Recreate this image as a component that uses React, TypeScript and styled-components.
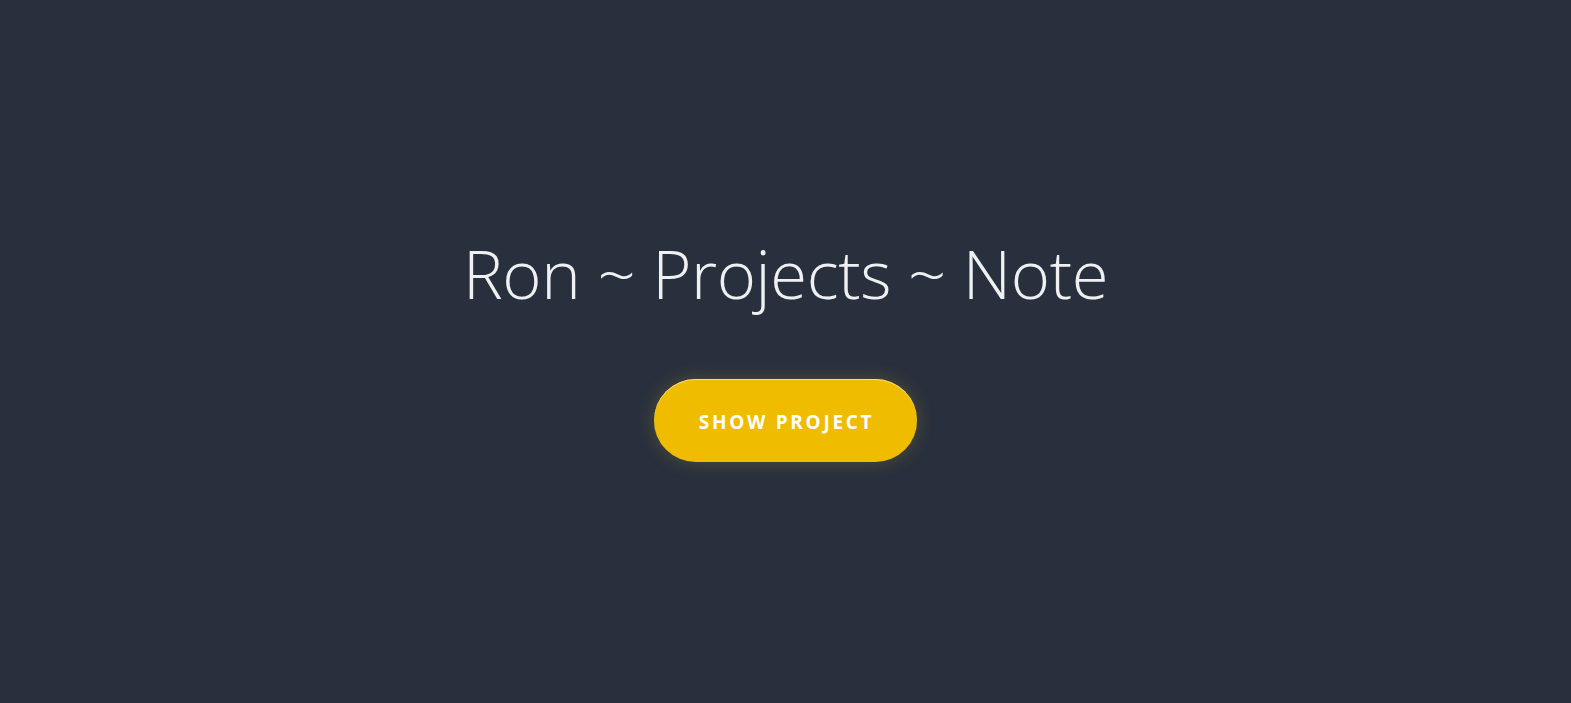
import React from "react";
import styled, { createGlobalStyle } from "styled-components";

const Global = createGlobalStyle`
  html, body { margin: 0; padding: 0; background: #29303d; }
  * { box-sizing: border-box; }
`;

const Page = styled.main`
  min-height: 100vh;
  display: flex;
  flex-direction: column;
  align-items: center;
  justify-content: center;
  background: #29303d;
  padding-bottom: 8px;
`;

const Title = styled.h1`
  margin: 0;
  font-family: "Open Sans", "Noto Sans", sans-serif;
  font-weight: 300;
  font-size: 67px;
  line-height: 1.2;
  letter-spacing: -0.4px;
  color: #eef0f2;
  text-align: center;
`;

const Button = styled.button`
  margin-top: 65px;
  width: 263px;
  height: 83px;
  padding: 4px 0 0;
  border: none;
  border-radius: 42px;
  background: #efbc00;
  color: #ffffff;
  font-family: "Open Sans", "Noto Sans", sans-serif;
  font-weight: 700;
  font-size: 19px;
  letter-spacing: 2.7px;
  text-indent: 2px;
  text-transform: uppercase;
  box-shadow: 0 0 18px rgba(200, 170, 40, 0.25), inset 0 1px 0 rgba(255, 240, 170, 0.7);
  cursor: pointer;
`;

export default function App() {
  return (
    <>
      <Global />
      <Page>
        <Title>Ron ~ Projects ~ Note</Title>
        <Button>Show Project</Button>
      </Page>
    </>
  );
}
